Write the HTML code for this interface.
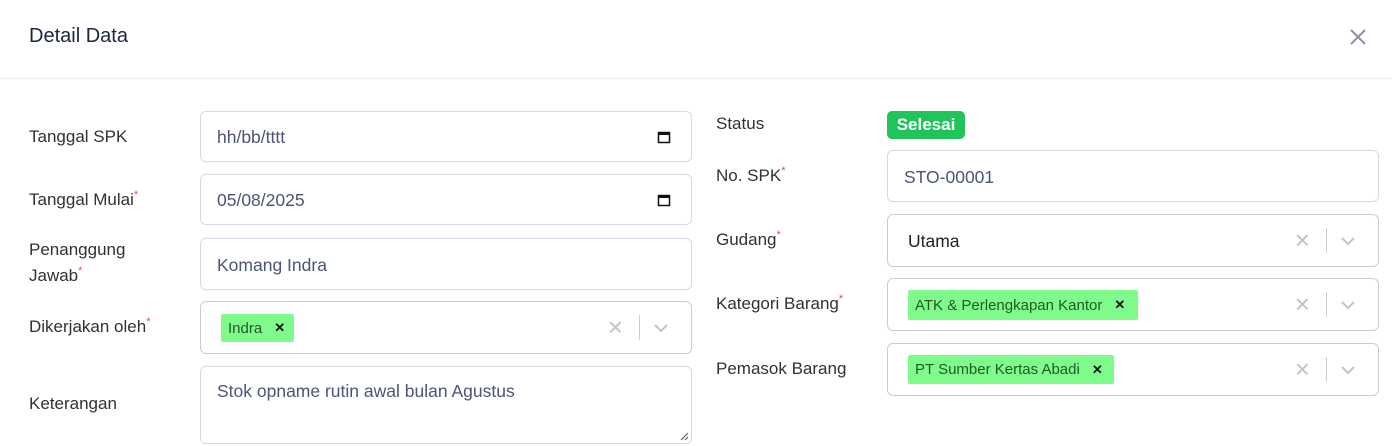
<!DOCTYPE html>
<html><head><style>
*{box-sizing:border-box;margin:0;padding:0}
body{width:1392px;height:446px;overflow:hidden;background:#fff;font-family:"Liberation Sans",sans-serif;position:relative;color:#2d2f36}
.a{position:absolute}
.hd{left:29px;top:25px;font-size:20px;color:#1c2540;font-weight:500}
.line{left:0;top:78px;width:1392px;height:1px;background:#eceef2}
.lbl{font-size:17px;color:#2f3137;line-height:26px}
.lbl sup{color:#e5484d;font-size:11px;position:relative;top:-7px;vertical-align:baseline;line-height:0}
.in{border:1px solid #d6d9e4;border-radius:6px;font-size:17.5px;color:#4a5578;display:flex;align-items:center;padding-left:16px;padding-top:2px}
.sel{border-color:#c9ccd4}
.chip{position:absolute;background:#7ffb8c;border-radius:2px;font-size:15px;color:#1d5a26;display:flex;align-items:center;padding-left:7px}
.chip b{color:#111;margin-left:12px;font-size:13px}
.ctl{position:absolute;right:0;top:0;height:100%;width:90px}
.ctl .x{position:absolute;left:6px;top:50%;transform:translateY(-50%);color:#c4c4c4;font-size:20px}
.ctl .s{position:absolute;left:38px;top:13px;bottom:13px;width:1px;background:#ccc}
.ctl svg{position:absolute;left:52px;top:50%;margin-top:-5px}
</style></head><body>
<div class="a hd">Detail Data</div>
<svg class="a" style="left:1349px;top:28px" width="18" height="18" viewBox="0 0 18 18"><path d="M2 2L16 16M16 2L2 16" stroke="#8a93a6" stroke-width="2"/></svg>
<div class="a line"></div>

<div class="a lbl" style="left:29px;top:124px">Tanggal SPK</div>
<div class="a in" style="left:200px;top:111px;width:492px;height:51px">hh/bb/tttt
<svg style="position:absolute;right:20px;top:18px" width="14" height="14" viewBox="0 0 14 14"><rect x="1.5" y="2.5" width="11" height="10" fill="none" stroke="#111" stroke-width="1.5"/><rect x="1.5" y="2" width="11" height="3" fill="#111"/></svg></div>

<div class="a lbl" style="left:29px;top:187px">Tanggal Mulai<sup>*</sup></div>
<div class="a in" style="left:200px;top:174px;width:492px;height:51px">05/08/2025
<svg style="position:absolute;right:20px;top:18px" width="14" height="14" viewBox="0 0 14 14"><rect x="1.5" y="2.5" width="11" height="10" fill="none" stroke="#111" stroke-width="1.5"/><rect x="1.5" y="2" width="11" height="3" fill="#111"/></svg></div>

<div class="a lbl" style="left:29px;top:237px">Penanggung<br>Jawab<sup>*</sup></div>
<div class="a in" style="left:200px;top:238px;width:492px;height:52px">Komang Indra</div>

<div class="a lbl" style="left:29px;top:314px">Dikerjakan oleh<sup>*</sup></div>
<div class="a in sel" style="left:200px;top:301px;width:492px;height:53px">
<div class="chip" style="left:20px;top:12px;width:73px;height:28px">Indra<b>✕</b></div>
<div class="ctl"><span class="x">✕</span><span class="s"></span><svg width="16" height="10" viewBox="0 0 16 10"><path d="M2 2l6 6 6-6" fill="none" stroke="#c4c4c4" stroke-width="2"/></svg></div></div>

<div class="a lbl" style="left:29px;top:391px">Keterangan</div>
<div class="a in" style="left:200px;top:366px;width:492px;height:78px;align-items:flex-start;padding-top:14px">Stok opname rutin awal bulan Agustus
<svg style="position:absolute;right:2px;bottom:2px" width="10" height="10"><path d="M9 2L2 9M9 6L6 9" stroke="#555" stroke-width="1"/></svg></div>

<div class="a lbl" style="left:716px;top:111px">Status</div>
<div class="a" style="left:887px;top:111px;width:78px;height:28px;background:#1fc45a;border-radius:5px;color:#fff;font-weight:bold;font-size:17px;text-align:center;line-height:27px">Selesai</div>

<div class="a lbl" style="left:716px;top:163px">No. SPK<sup>*</sup></div>
<div class="a in" style="left:887px;top:150px;width:492px;height:52px">STO-00001</div>

<div class="a lbl" style="left:716px;top:227px">Gudang<sup>*</sup></div>
<div class="a in sel" style="left:887px;top:214px;width:492px;height:53px;padding-left:20px;color:#222">Utama
<div class="ctl"><span class="x">✕</span><span class="s"></span><svg width="16" height="10" viewBox="0 0 16 10"><path d="M2 2l6 6 6-6" fill="none" stroke="#c4c4c4" stroke-width="2"/></svg></div></div>

<div class="a lbl" style="left:716px;top:291px">Kategori Barang<sup>*</sup></div>
<div class="a in sel" style="left:887px;top:278px;width:492px;height:53px">
<div class="chip" style="left:20px;top:11px;width:230px;height:30px">ATK &amp; Perlengkapan Kantor<b>✕</b></div>
<div class="ctl"><span class="x">✕</span><span class="s"></span><svg width="16" height="10" viewBox="0 0 16 10"><path d="M2 2l6 6 6-6" fill="none" stroke="#c4c4c4" stroke-width="2"/></svg></div></div>

<div class="a lbl" style="left:716px;top:356px">Pemasok Barang</div>
<div class="a in sel" style="left:887px;top:343px;width:492px;height:53px">
<div class="chip" style="left:20px;top:11px;width:206px;height:29px">PT Sumber Kertas Abadi<b>✕</b></div>
<div class="ctl"><span class="x">✕</span><span class="s"></span><svg width="16" height="10" viewBox="0 0 16 10"><path d="M2 2l6 6 6-6" fill="none" stroke="#c4c4c4" stroke-width="2"/></svg></div></div>
</body></html>
